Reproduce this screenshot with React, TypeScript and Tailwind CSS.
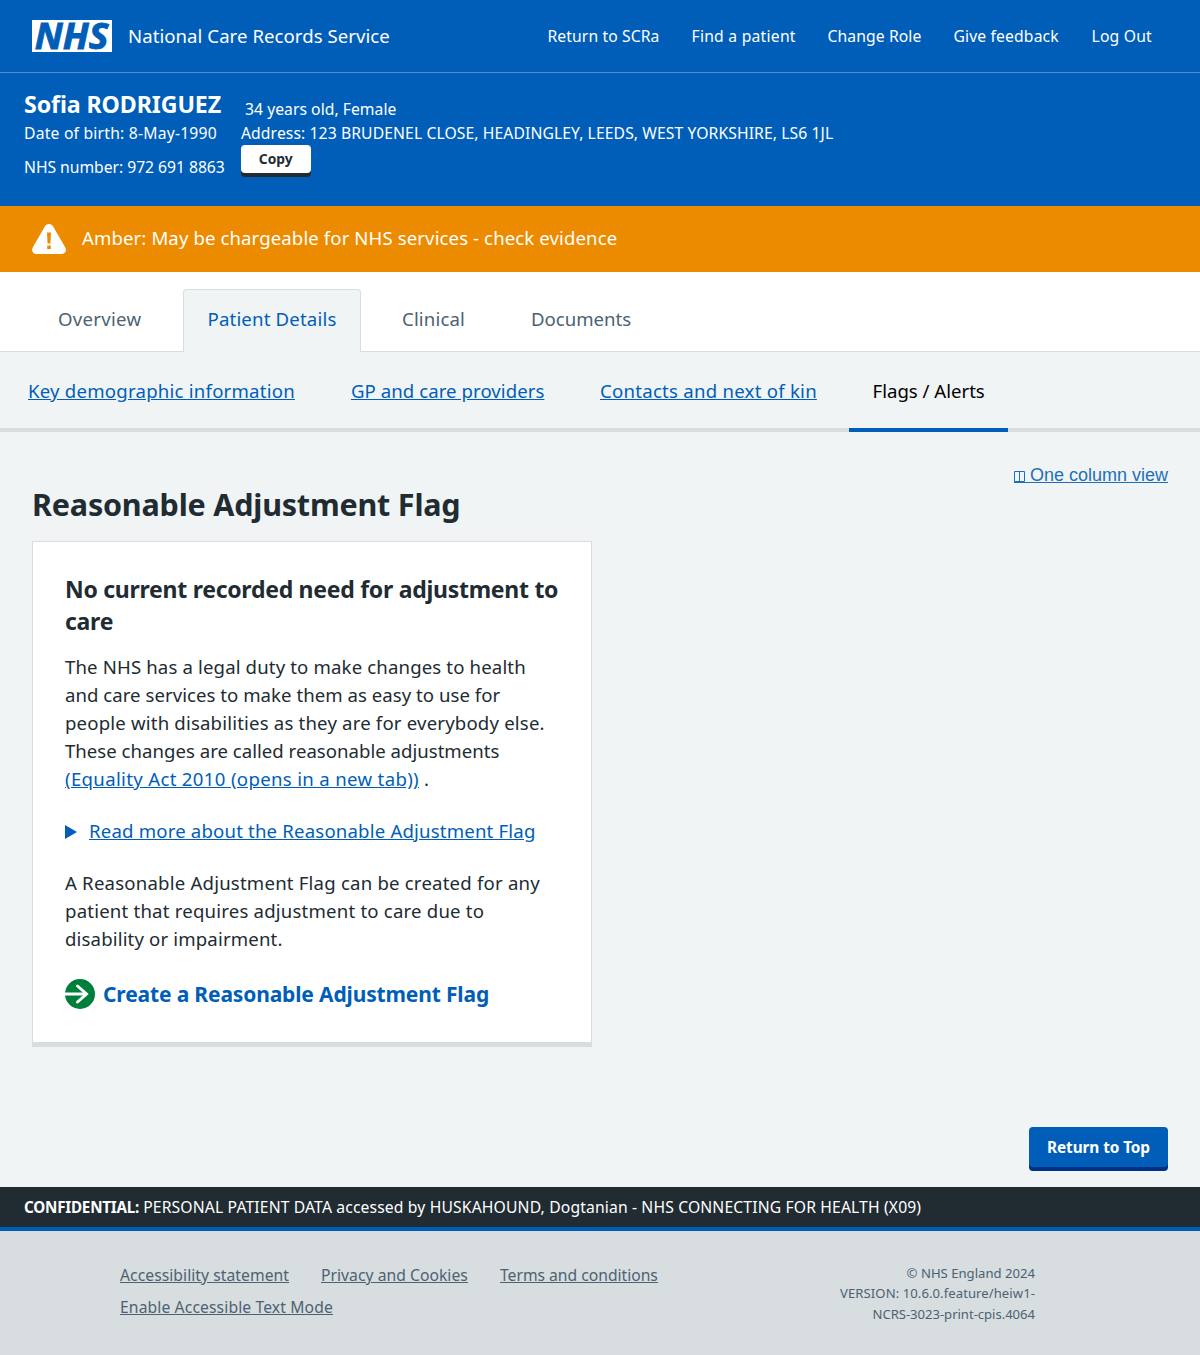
type NavItem = { label: string; tracking: string };

const headerLinks: NavItem[] = [
  { label: "Return to SCRa", tracking: "w-[112px] tracking-[0.1px]" },
  { label: "Find a patient", tracking: "w-[104px] tracking-[0.24px]" },
  { label: "Change Role", tracking: "w-[94px] tracking-[0.1px]" },
  { label: "Give feedback", tracking: "w-[106px] tracking-[0.14px]" },
  { label: "Log Out", tracking: "w-[60px] tracking-[0.2px]" },
];

function NhsLogo() {
  return (
    <svg className="h-8 w-20 shrink-0 overflow-visible" viewBox="0 0 80 32" role="img" aria-label="NHS">
      <rect width="80" height="32" fill="#fff" />
      <text
        x="2.8"
        y="28.7"
        fill="#005eb8"
        stroke="#005eb8"
        strokeWidth="0.9"
        fontFamily='"Open Sans", "Noto Sans", sans-serif'
        fontSize="35.5"
        fontWeight="700"
        fontStyle="italic"
        textLength="73.5"
        lengthAdjust="spacingAndGlyphs"
      >
        NHS
      </text>
    </svg>
  );
}

function Header() {
  return (
    <header className="flex h-[73px] items-center justify-between border-b border-[#4c8ecd] bg-[#005eb8] pr-[48.5px] pl-8 text-white">
      <div className="flex items-center gap-4">
        <NhsLogo />
        <span className="text-[18.6px] leading-7 tracking-[0.05px]">National Care Records Service</span>
      </div>
      <nav className="flex gap-8 text-[15.7px] leading-6 whitespace-nowrap">
        {headerLinks.map((l) => (
          <a key={l.label} className={l.tracking}>
            {l.label}
          </a>
        ))}
      </nav>
    </header>
  );
}

function PatientBanner() {
  return (
    <section className="flex h-[133px] bg-[#005eb8] pl-6 text-[15.7px] leading-6 whitespace-nowrap text-white">
      <div className="w-[217px] pt-[15px]">
        <h2 className="mb-px text-[23.2px] leading-8 font-bold tracking-[-0.1px]">Sofia RODRIGUEZ</h2>
        <p className="tracking-[0.21px]">Date of birth: 8-May-1990</p>
        <p className="mt-2.5 tracking-[-0.03px]">NHS number: 972 691 8863</p>
      </div>
      <div className="pt-6">
        <p className="pl-1 tracking-[0.04px]">34 years old, Female</p>
        <p className="tracking-[0.1px]">Address: 123 BRUDENEL CLOSE, HEADINGLEY, LEEDS, WEST YORKSHIRE, LS6 1JL</p>
        <button className="block h-7 w-[69.5px] rounded bg-white text-[13.8px] leading-7 font-bold text-[#212b32] shadow-[0_4px_0_#212b32]">
          Copy
        </button>
      </div>
    </section>
  );
}

function AmberAlert() {
  return (
    <section className="flex h-[66px] items-center gap-4 bg-[#ed8b00] pl-8 text-white">
      <svg className="h-[30px] w-[34px] shrink-0" viewBox="0 0 34 30" aria-hidden="true">
        <path
          d="M13.1 2.1C14.9-.7 19.1-.7 20.9 2.1L33.3 23.6C35 26.8 33.1 30 29.6 30H4.4C.9 30-1 26.8.7 23.6Z"
          fill="#fff"
        />
        <path d="M15 8.5h4l-.6 11h-2.8Z" fill="#ed8b00" />
        <rect x="15.2" y="21.5" width="3.6" height="3.5" fill="#ed8b00" />
      </svg>
      <span className="mb-0.5 text-[18.6px] leading-7 tracking-[0.1px]">
        Amber: May be chargeable for NHS services - check evidence
      </span>
    </section>
  );
}

function PrimaryTabs() {
  return (
    <nav className="flex h-20 items-end border-b border-[#d8dde0] bg-white pl-[33px] text-[18.6px] leading-7 text-[#4c6272]">
      <a className="h-[62px] w-[150px] pt-4 pl-[25px] tracking-[0.29px]">Overview</a>
      <a className="-mb-px h-[63px] w-[178px] rounded-t border border-b-0 border-[#d8dde0] bg-[#f0f4f5] pt-[15px] pl-[23.5px] tracking-[0.17px] text-[#005eb8]">
        Patient Details
      </a>
      <a className="h-[62px] w-[129px] pt-4 pl-[41px] tracking-[0.15px]">Clinical</a>
      <a className="h-[62px] pt-4 pl-[41px]">Documents</a>
    </nav>
  );
}

const link = "text-[#005eb8] underline";

function SecondaryTabs() {
  return (
    <nav className="flex h-20 pl-1 text-[18.6px] leading-7 whitespace-nowrap shadow-[inset_0_-4px_0_#d8dde0]">
      <div className="w-[323px] px-6 pt-[25px]">
        <a className={`${link} tracking-[0.226px]`}>Key demographic information</a>
      </div>
      <div className="w-[249px] px-6 pt-[25px]">
        <a className={`${link} tracking-[0.06px]`}>GP and care providers</a>
      </div>
      <div className="w-[273px] px-6 pt-[25px]">
        <a className={`${link} tracking-[0.25px]`}>Contacts and next of kin</a>
      </div>
      <div className="w-[159.4px] border-b-4 border-[#005eb8] pt-[25px] pl-[23.5px] text-black">Flags / Alerts</div>
    </nav>
  );
}

function FlagCard() {
  return (
    <article className="mt-[17px] h-[506px] w-[560px] border border-b-5 border-[#d8dde0] bg-white px-8 pt-[31px] text-[18.6px] leading-7 whitespace-nowrap">
      <h3 className="text-[23px] leading-8 font-bold tracking-[-0.27px]">
        No current recorded need for adjustment to
        <br />
        care
      </h3>
      <p className="mt-4 tracking-[0.14px]">
        The NHS has a legal duty to make changes to health
        <br />
        <span className="tracking-[0.035px]">and care services to make them as easy to use for</span>
        <br />
        <span className="tracking-[0.18px]">people with disabilities as they are for everybody else.</span>
        <br />
        <span className="tracking-[0.01px]">These changes are called reasonable adjustments</span>
        <br />
        <a className={`${link} tracking-[0.33px]`}>(Equality Act 2010 (opens in a new tab))</a> .
      </p>
      <div className="mt-6 flex items-center">
        <svg className="mt-0.5 mr-3 h-[14px] w-3" viewBox="0 0 12 14" aria-hidden="true">
          <path d="M0 0L12 7L0 14Z" fill="#005eb8" />
        </svg>
        <a className={`${link} tracking-[0.18px]`}>Read more about the Reasonable Adjustment Flag</a>
      </div>
      <p className="mt-6 tracking-[0.2px]">
        A Reasonable Adjustment Flag can be created for any
        <br />
        patient that requires adjustment to care due to
        <br />
        <span className="tracking-[0.15px]">disability or impairment.</span>
      </p>
      <a className="mt-6 flex items-center gap-2 text-[21px] leading-[34px] font-bold tracking-[-0.15px] text-[#005eb8]">
        <svg className="size-[30px]" viewBox="0 0 30 30" fill="none" aria-hidden="true">
          <circle cx="15" cy="15" r="15" fill="#007f3b" />
          <path d="M0 15H21" stroke="#fff" strokeWidth="3" />
          <path d="M12.5 7L21.5 15L12.5 23" stroke="#fff" strokeWidth="3" strokeLinecap="round" />
        </svg>
        Create a Reasonable Adjustment Flag
      </a>
    </article>
  );
}

function Main() {
  return (
    <main className="flex h-[755px] flex-col px-8 pt-[30px]">
      <a className="flex h-[26px] items-center self-end text-[18px] text-[#1d70b8]">
        <svg className="mt-[3px] h-[11px] w-[11px]" viewBox="0 0 11 11" fill="none" aria-hidden="true">
          <path d="M.5.5h10v10H.5zM5.5.5v10" stroke="#1d70b8" />
        </svg>
        <span className="-ml-[11px] w-[154px] font-['Liberation_Sans',Arial,sans-serif] leading-[22px] whitespace-pre underline">
          <span className="tracking-[11px]">{"\u00a0"}</span>One column view
        </span>
      </a>
      <h1 className="-mt-1 text-[30.5px] leading-10 font-bold tracking-[-0.2px]">Reasonable Adjustment Flag</h1>
      <FlagCard />
      <button className="mt-20 h-10 w-[139px] self-end rounded bg-[#005eb8] pt-px text-[15.4px] leading-[39px] font-bold tracking-[-0.1px] text-white shadow-[0_4px_0_#003087]">
        Return to Top
      </button>
    </main>
  );
}

function Footer() {
  return (
    <footer>
      <div className="h-10 bg-[#212b32] pl-6 text-[15.7px] leading-10 whitespace-nowrap text-white">
        <strong className="text-[15.2px] font-bold tracking-[-0.22px]">CONFIDENTIAL:</strong>{" "}
        <span className="tracking-[0.14px]">
          PERSONAL PATIENT DATA accessed by HUSKAHOUND, Dogtanian - NHS CONNECTING FOR HEALTH (X09)
        </span>
      </div>
      <div className="flex h-32 justify-between border-t-4 border-[#005eb8] bg-[#d8dde0] pr-[165px] pl-[120px] text-[#4c6272]">
        <div className="w-[560px] pt-8 text-[15.7px] leading-6">
          <div className="flex flex-wrap gap-x-8 gap-y-2 whitespace-nowrap underline">
            <a className="w-[169px] tracking-[0.05px]">Accessibility statement</a>
            <a className="w-[147px] tracking-[0.03px]">Privacy and Cookies</a>
            <a className="tracking-[-0.02px]">Terms and conditions</a>
            <a className="tracking-[0.11px]">Enable Accessible Text Mode</a>
          </div>
        </div>
        <p className="pt-8 text-right text-[13.1px] leading-[20.4px] tracking-[0.07px] whitespace-nowrap">
          <span className="tracking-[0.01px]">© NHS England 2024</span>
          <br />
          VERSION: 10.6.0.feature/heiw1-
          <br />
          <span className="tracking-[-0.03px]">NCRS-3023-print-cpis.4064</span>
        </p>
      </div>
    </footer>
  );
}

export default function App() {
  return (
    <div className="w-[1200px] bg-[#f0f4f5] font-['Noto_Sans','Open_Sans',sans-serif] text-[#212b32]">
      <Header />
      <PatientBanner />
      <AmberAlert />
      <PrimaryTabs />
      <SecondaryTabs />
      <Main />
      <Footer />
    </div>
  );
}
